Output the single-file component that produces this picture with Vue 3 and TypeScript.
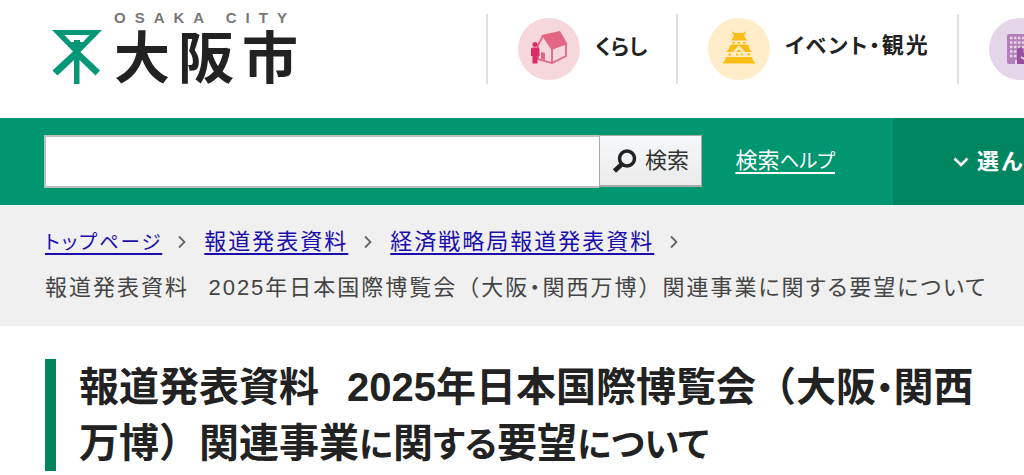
<script setup lang="ts">
interface Piece {
  text: string
  kana: boolean
}

const title = '報道発表資料\u2002\u20092025年日本国際博覧会（大阪・関西万博）関連事業に関する要望について'
const crumbs: string[] = ['トップページ', '報道発表資料', '経済戦略局報道発表資料']

// Kana are set small and proportional, while kanji and brackets keep their full width.
function pieces(text: string): Piece[] {
  return (text.match(/[ぁ-ヿ]+|[^ぁ-ヿ]+/g) ?? []).map((part) => ({
    text: part,
    kana: /^[ぁ-ヿ]/.test(part),
  }))
}
</script>

<template>
  <div class="page">
    <header class="header">
      <a class="logo" href="#">
        <svg class="mark" viewBox="0 0 50 54" aria-hidden="true">
          <path d="M0 0H50L28.500 22L48 40.500L43.500 45.500L27.500 30V54H22V30L5.500 45.500L.5 40.500L21 21.500ZM12.500 5L19 12H22V10H28V12H31L37.500 5Z" fill="#069778" fill-rule="evenodd" />
        </svg>
        <span class="names">
          <span class="roman">OSAKA CITY</span>
          <span class="city">大阪市</span>
        </span>
      </a>
      <nav class="nav" aria-label="メインメニュー">
        <a class="item" href="#">
          <svg class="icon" viewBox="0 0 62 62" aria-hidden="true">
            <circle cx="31" cy="31" r="31" fill="#f6d8dc" />
            <path d="M20 28V41L34 45L48 38V26M34 31V45M19.500 28L25 18" fill="none" stroke="#e36783" stroke-width="1.800" />
            <path d="M23.500 17L42 13L49.500 26L33.500 32Z" fill="#e36783" />
            <path d="M23 34L27 35V42L23 41Z" fill="#e36783" />
            <circle cx="17" cy="26.500" r="2.500" fill="#de2b65" />
            <path d="M14 29.500H20L21.500 31V38H19.500V45.500H14.500V38H13V31Z" fill="#de2b65" />
          </svg>
          <span class="kana">くらし</span>
        </a>
        <a class="item" href="#">
          <svg class="icon" viewBox="0 0 62 62" aria-hidden="true">
            <circle cx="31" cy="31" r="31" fill="#ffedca" />
            <g fill="#fabd16">
              <path d="M24.500 13L26.500 15H35.500L37.500 13V16L36 17L37.500 20L39 22.500H23L25 19.500L26 17L24.500 16Z" />
              <path d="M22 27L25 26.500H37L40.500 27L41.500 31L44 34H37L34.500 31L31 27.500L27.500 31L25 34H18L21 31ZM28.500 34L31 31L33.500 34Z" />
              <path d="M18 39H44L45 42L47.500 45.500H14.500L17 42Z" />
              <path d="M24 24H27V25.500H24ZM29.500 24H32.500V25.500H29.500ZM35 24H38V25.500H35ZM20.500 35.500H23V37.500H20.500ZM28 35.500H30V37.500H28ZM33 35.500H35V37.500H33ZM39.500 35.500H42V37.500H39.500Z" />
            </g>
          </svg>
          <span><span class="kana">イベント・</span>観光</span>
        </a>
        <a class="item" href="#" aria-label="ビジネス">
          <svg class="icon" viewBox="0 0 62 62" aria-hidden="true">
            <circle cx="31" cy="31" r="31" fill="#e4d6e8" />
            <rect x="18" y="16" width="27" height="30" rx="2" fill="#b47fb9" />
            <path d="M21 20H43M21 24.500H43M21 29H43M21 33.500H28M21 38H28" stroke="#e4d6e8" stroke-width="2.500" stroke-dasharray="2.500 1.500" />
            <path d="M26 46V42H28V46Z" fill="#e4d6e8" />
            <path d="M28 46V31L32 29L34 31V35L38 34V46Z" fill="#984f9d" />
            <path d="M32 39L35 41" stroke="#e4d6e8" stroke-width="2" />
          </svg>
        </a>
      </nav>
    </header>

    <div class="bar">
      <form class="search" role="search" @submit.prevent>
        <input class="field" type="text" aria-label="サイト内検索" />
        <button class="submit" type="submit">
          <svg class="lens" viewBox="0 0 24 24" aria-hidden="true">
            <circle cx="14" cy="9.500" r="7.500" fill="none" stroke="#222" stroke-width="3.500" />
            <path d="M9 15L1.500 22" stroke="#222" stroke-width="4.500" />
          </svg>
          <span class="label">検索</span>
        </button>
      </form>
      <a class="help" href="#">検索<span class="kana">ヘルプ</span></a>
      <button class="choose" type="button">
        <svg class="down" viewBox="0 0 16 10" aria-hidden="true">
          <path d="M1.500 1.500L8 8L14.500 1.500" fill="none" stroke="#fff" stroke-width="2.600" />
        </svg>
        <span class="label">選んで</span>
      </button>
    </div>

    <nav class="crumbs" aria-label="現在位置">
      <ol class="trail">
        <li v-for="crumb in crumbs" :key="crumb" class="crumb">
          <a class="link" href="#"><span v-for="(p, i) in pieces(crumb)" :key="i" :class="{ kana: p.kana }">{{ p.text }}</span></a>
          <svg class="next" viewBox="0 0 8 14" aria-hidden="true">
            <path d="M1 1.500L6.500 7L1 12.500" fill="none" stroke="#666" stroke-width="1.800" />
          </svg>
        </li>
        <li class="current" aria-current="page"><span v-for="(p, i) in pieces(title)" :key="i" :class="{ kana: p.kana }">{{ p.text }}</span></li>
      </ol>
    </nav>

    <main class="main">
      <h1 class="title"><span v-for="(p, i) in pieces(title)" :key="i" :class="{ kana: p.kana }">{{ p.text }}</span></h1>
    </main>
  </div>
</template>

<style>
body {
  margin: 0;
  background: #fff;
}
</style>

<style scoped>
.page {
  overflow: hidden;
  color: #222;
  font-family: "Liberation Sans", "Noto Sans CJK JP", sans-serif;
}
.kana {
  font-size: 88%;
  font-feature-settings: "palt";
  line-height: 1;
}
.header {
  display: flex;
  align-items: flex-start;
  justify-content: space-between;
  height: 118px;
}
.logo {
  display: flex;
  flex: none;
  gap: 12px;
  padding: 10px 0 0 52px;
  color: #222;
  text-decoration: none;
}
.mark {
  width: 50px;
  height: 54px;
  margin-top: 20px;
}
.names {
  display: flex;
  flex-direction: column;
}
.roman {
  color: #777;
  font-size: 15px;
  font-weight: 700;
  line-height: 16px;
  letter-spacing: 9px;
}
.city {
  font-size: 56px;
  font-weight: 700;
  line-height: 66px;
  letter-spacing: 8px;
}
.nav {
  display: grid;
  grid-template-columns: 190px 281px 67px;
  flex: none;
  margin-top: 14px;
}
.item {
  display: flex;
  align-items: center;
  gap: 15px;
  height: 70px;
  padding-left: 30px;
  border-left: 2px solid #e0e0e0;
  color: #222;
  font-size: 22px;
  font-weight: 700;
  line-height: 30px;
  letter-spacing: 2px;
  text-decoration: none;
  white-space: nowrap;
}
.item > span {
  margin-bottom: 6px;
}
.item .kana {
  font-size: 21px;
}
.item > .kana {
  letter-spacing: normal;
}
.icon {
  flex: none;
  width: 62px;
  height: 62px;
}
.bar {
  display: flex;
  align-items: center;
  height: 87px;
  padding-left: 44px;
  background: #009670;
}
.search {
  display: flex;
  flex: 1;
  align-items: flex-start;
  min-width: 0;
}
.field {
  flex: 1;
  box-sizing: border-box;
  min-width: 0;
  height: 53px;
  padding: 0 12px;
  border: 2px solid #b9c2be;
  border-right-width: 0;
  border-radius: 0;
  background: #fff;
  font: inherit;
  font-size: 22px;
}
.submit {
  display: flex;
  flex: none;
  box-sizing: border-box;
  align-items: center;
  justify-content: center;
  gap: 8px;
  width: 103px;
  height: 52px;
  padding: 0;
  border: 1px solid #aaa;
  border-bottom-width: 2px;
  background: linear-gradient(#f5f8fa, #ebebeb);
  color: #333;
  font: inherit;
  font-size: 22px;
  white-space: nowrap;
}
.label {
  padding-bottom: 6px;
}
.lens {
  width: 24px;
  height: 24px;
}
.help {
  flex: none;
  margin: 0 58px 0 33px;
  padding-bottom: 8px;
  color: #fff;
  font-size: 22px;
  text-decoration-thickness: 2px;
  text-underline-offset: 4px;
}
.choose {
  display: flex;
  flex: none;
  align-items: center;
  gap: 8px;
  width: 131px;
  height: 100%;
  padding: 0 0 0 60px;
  border: 0;
  overflow: hidden;
  background: #008561;
  color: #fff;
  font: inherit;
  font-size: 22px;
  font-weight: 700;
  letter-spacing: 2px;
  white-space: nowrap;
}
.down {
  flex: none;
  width: 16px;
  height: 10px;
}
.crumbs {
  padding: 14px 32px 15px 45px;
  background: #f0f0f0;
}
.trail {
  display: flex;
  flex-wrap: wrap;
  margin: 0;
  padding: 0;
  color: #444;
  font-size: 22px;
  line-height: 46px;
  letter-spacing: 2px;
  list-style: none;
}
.crumb {
  display: flex;
  align-items: center;
}
.current .kana {
  font-size: 22px;
}
.link {
  color: #1a0dab;
  text-decoration-line: underline;
  text-decoration-thickness: 2px;
  text-underline-offset: 4px;
}
.next {
  width: 8px;
  height: 14px;
  margin: 0 18px 0 16px;
}
.main {
  padding: 33px 39px 0 45px;
}
.title {
  margin: 0;
  padding-left: 23px;
  border-left: 11px solid #008561;
  font-size: 40px;
  font-weight: 700;
  line-height: 56px;
}
</style>
